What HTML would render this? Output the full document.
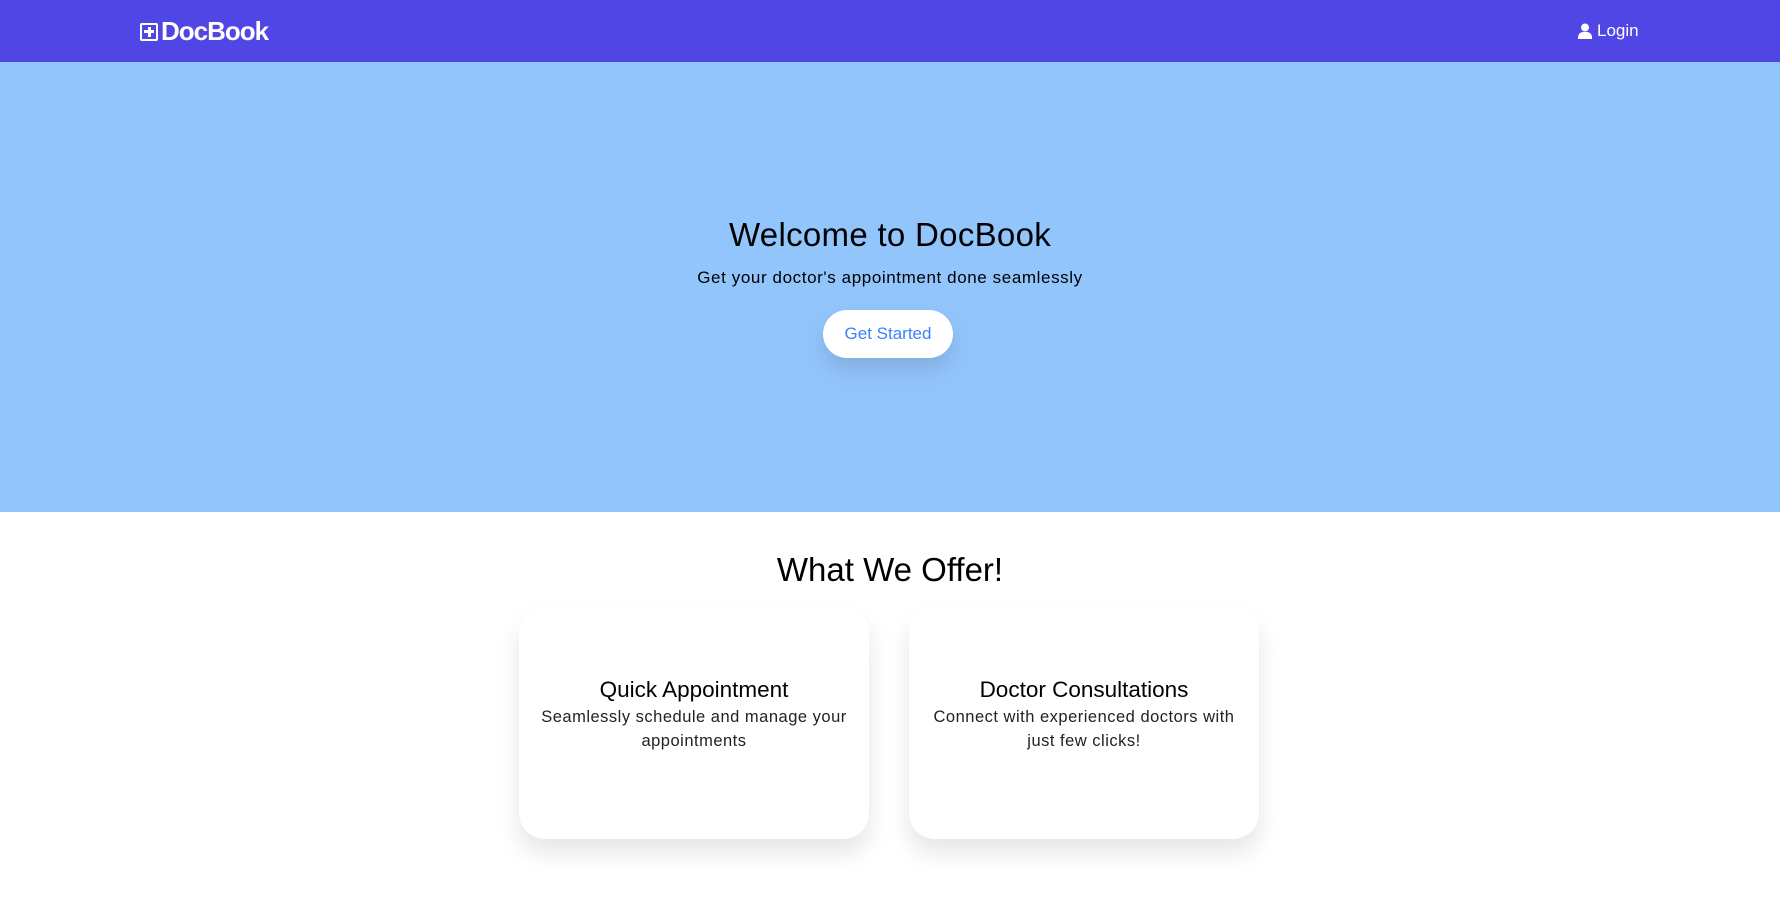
<!DOCTYPE html>
<html><head><style>
*{margin:0;padding:0;box-sizing:border-box}
body{width:1780px;height:905px;overflow:hidden;background:#fff;font-family:"Liberation Sans",sans-serif;color:#000}
.nav{height:62px;background:#4f46e5;position:relative;color:#fff}
.logo{position:absolute;left:140px;top:16px;font-size:26px;font-weight:bold;letter-spacing:-1px;display:flex;align-items:center}
.logo .ic{width:18px;height:18px;border:2px solid #fff;border-radius:2px;position:relative;margin-right:3px}
.logo .ic:before{content:"";position:absolute;left:6px;top:2px;width:3px;height:10px;background:#fff}
.logo .ic:after{content:"";position:absolute;left:2px;top:5.5px;width:10px;height:3px;background:#fff}
.login{position:absolute;left:1578px;top:21px;font-size:17px;display:flex;align-items:center}
.hero{height:450px;background:#93c5fd;text-align:center;position:relative}
.hero h1{position:absolute;top:154px;width:100%;font-size:33px;font-weight:normal;letter-spacing:0.3px}
.hero p{position:absolute;top:206px;width:100%;font-size:17px;letter-spacing:0.6px}
.btn{position:absolute;left:823px;top:248px;width:130px;height:48px;border-radius:24px;background:#fff;color:#3b82f6;font-size:17px;line-height:48px;box-shadow:0 12px 24px rgba(0,0,0,.12)}
h2{position:absolute;top:551px;width:100%;text-align:center;font-size:33px;font-weight:normal}
.card{position:absolute;top:607px;width:350px;height:232px;background:#fff;border-radius:26px;box-shadow:0 14px 24px rgba(0,0,0,.1);text-align:center;padding-top:70px}
.card h3{font-size:22.5px;font-weight:normal;margin-bottom:2px}
.card p{font-size:16.5px;line-height:24px;color:#222;padding:0 14px;letter-spacing:0.5px}
</style></head><body>
<div class="nav"><div class="logo"><span class="ic"></span>DocBook</div>
<div class="login"><svg width="14" height="16" viewBox="0 0 14 16" style="margin-right:5px"><circle cx="7" cy="4.5" r="4" fill="#fff"/><path d="M0 16v-2a5 5 0 0 1 5-5h4a5 5 0 0 1 5 5v2z" fill="#fff"/></svg>Login</div></div>
<div class="hero"><h1>Welcome to DocBook</h1><p>Get your doctor's appointment done seamlessly</p><div class="btn">Get Started</div></div>
<h2>What We Offer!</h2>
<div class="card" style="left:519px"><h3>Quick Appointment</h3><p>Seamlessly schedule and manage your appointments</p></div>
<div class="card" style="left:909px"><h3>Doctor Consultations</h3><p>Connect with experienced doctors with just few clicks!</p></div>
</body></html>
